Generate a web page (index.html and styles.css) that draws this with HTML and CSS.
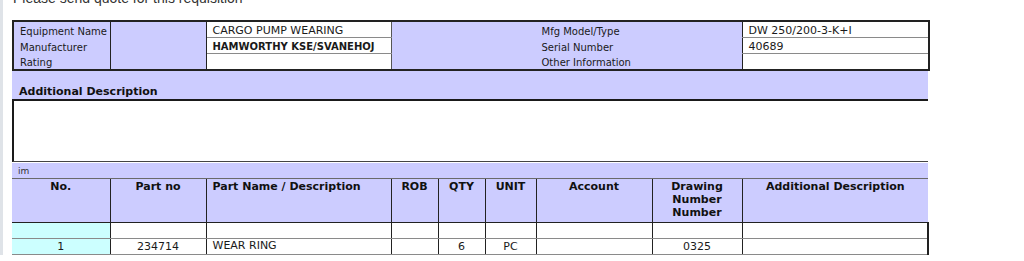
FILE: index.html
```html
<!DOCTYPE html>
<html lang="en">
<head>
<meta charset="utf-8">
<title>Requisition</title>
<link rel="stylesheet" href="styles.css">
</head>
<body>
<div class="page">
  <main class="sheet">
    <p class="title">Please send quote for this requisition</p>

    <table class="equip">
      <colgroup>
        <col class="c1"><col class="c2"><col class="c3"><col class="c4"><col class="c5">
      </colgroup>
      <tr>
        <td class="lbl">Equipment Name</td>
        <td class="blank" rowspan="3"></td>
        <td class="val">CARGO PUMP WEARING</td>
        <td class="lbl lbl-r">Mfg Model/Type</td>
        <td class="val val-r">DW 250/200-3-K+I</td>
      </tr>
      <tr>
        <td class="lbl">Manufacturer</td>
        <td class="val strong">HAMWORTHY KSE/SVANEHOJ</td>
        <td class="lbl lbl-r">Serial Number</td>
        <td class="val val-r">40689</td>
      </tr>
      <tr>
        <td class="lbl">Rating</td>
        <td class="val"></td>
        <td class="lbl lbl-r">Other Information</td>
        <td class="val val-r"></td>
      </tr>
    </table>

    <section class="addl">
      <h3 class="addl-title">Additional Description</h3>
      <div class="addl-body"></div>
    </section>

    <div class="im">im</div>

    <table class="items">
      <colgroup>
        <col class="i1"><col class="i2"><col class="i3"><col class="i4"><col class="i5">
        <col class="i6"><col class="i7"><col class="i8"><col class="i9">
      </colgroup>
      <thead>
        <tr>
          <th>No.</th>
          <th>Part no</th>
          <th class="left">Part Name / Description</th>
          <th>ROB</th>
          <th>QTY</th>
          <th>UNIT</th>
          <th>Account</th>
          <th>Drawing<br>Number<br>Number</th>
          <th>Additional Description</th>
        </tr>
      </thead>
      <tbody>
        <tr>
          <td class="no"></td>
          <td></td>
          <td></td>
          <td></td>
          <td></td>
          <td></td>
          <td></td>
          <td></td>
          <td class="last"></td>
        </tr>
        <tr>
          <td class="no">1</td>
          <td>234714</td>
          <td class="left name">WEAR RING</td>
          <td></td>
          <td>6</td>
          <td>PC</td>
          <td></td>
          <td>0325</td>
          <td class="last"></td>
        </tr>
      </tbody>
    </table>
  </main>
</div>
</body>
</html>
```

FILE: styles.css
```css
html, body {
  margin: 0;
  background: #fff;
}

body {
  font-family: "DejaVu Sans", Verdana, sans-serif;
  color: #1a1a1a;
  overflow: hidden;
}

/* light frame edge down the left side */
.page {
  border-left: 3px solid #dfe3e8;
  padding-left: 9px;
  min-height: 261px;
  box-sizing: border-box;
}

.sheet {
  width: 916px;
}

.title {
  margin: -10px 0 0 1px;
  font: 14px/16px "Liberation Sans", Arial, sans-serif;
  color: #333;
}

/* ---------- equipment header ---------- */
.equip {
  margin-top: 14px;
  width: 916px;
  border-collapse: collapse;
  table-layout: fixed;
  border: 2px solid #222;
}

.equip .c1 { width: 97px; }
.equip .c2 { width: 96px; }
.equip .c3 { width: 185px; }
.equip .c4 { width: 351px; }
.equip .c5 { width: 187px; }

.equip td {
  height: 15px;
  padding: 0 6px;
  font-size: 10px;
  line-height: 12px;
  vertical-align: bottom;
  white-space: nowrap;
  overflow: hidden;
}

.equip .lbl {
  background: #ccf;
}

.equip .lbl-r {
  padding-left: 150px;
}

.equip .blank {
  background: #ccf;
  border-left: 1px solid #222;
  border-right: 1px solid #222;
}

.equip .val {
  background: #fff;
  font-size: 11px;
  border-top: 1px solid #8a8a8a;
  border-bottom: 1px solid #8a8a8a;
  border-left: 1px solid #555;
  border-right: 1px solid #555;
}

.equip .val-r {
  border-left: 1px solid #222;
}

.equip .strong {
  font-size: 10px;
  font-weight: bold;
}

/* ---------- additional description block ---------- */
.addl {
  margin: 0;
}

.addl-title {
  margin: 0;
  height: 28px;
  box-sizing: border-box;
  padding: 0 0 1px 7px;
  background: #ccf;
  display: flex;
  align-items: flex-end;
  font-size: 11px;
  line-height: 13px;
  font-weight: bold;
  color: #111;
}

.addl-body {
  height: 60px;
  border-top: 2px solid #1a1a1a;
  border-left: 2px solid #1a1a1a;
  border-bottom: 1px solid #444;
  background: #fff;
}

.im {
  margin-top: 1px;
  height: 15px;
  padding-left: 6px;
  background: #ccf;
  font-size: 9px;
  line-height: 16px;
  color: #333;
  border-bottom: 1px solid #6a6a6a;
}

/* ---------- item lines ---------- */
.items {
  width: 916px;
  border-collapse: collapse;
  table-layout: fixed;
}

.items .i1 { width: 98px; }
.items .i2 { width: 96px; }
.items .i3 { width: 185px; }
.items .i4 { width: 47px; }
.items .i5 { width: 47px; }
.items .i6 { width: 51px; }
.items .i7 { width: 116px; }
.items .i8 { width: 90px; }
.items .i9 { width: 186px; }

.items th {
  height: 42px;
  padding: 1px 4px 0;
  background: #ccf;
  font-size: 11px;
  line-height: 13px;
  font-weight: bold;
  text-align: center;
  vertical-align: top;
  color: #111;
  border-left: 1px solid #222;
  border-bottom: 1px solid #222;
}

.items th:first-child {
  border-left: none;
}

.items th.left {
  text-align: left;
  padding-left: 6px;
}

.items td {
  height: 15px;
  padding: 0 4px;
  font-size: 11px;
  line-height: 14px;
  text-align: center;
  vertical-align: middle;
  background: #fff;
  border-left: 1px solid #222;
  border-bottom: 1px solid #8a8a8a;
}

.items td.no {
  background: #cff;
  border-left: none;
}

.items td.left {
  text-align: left;
  padding-left: 6px;
}

.items td.name {
  vertical-align: top;
  line-height: 13px;
}

.items td.last {
  border-right: 2px solid #222;
}
```
